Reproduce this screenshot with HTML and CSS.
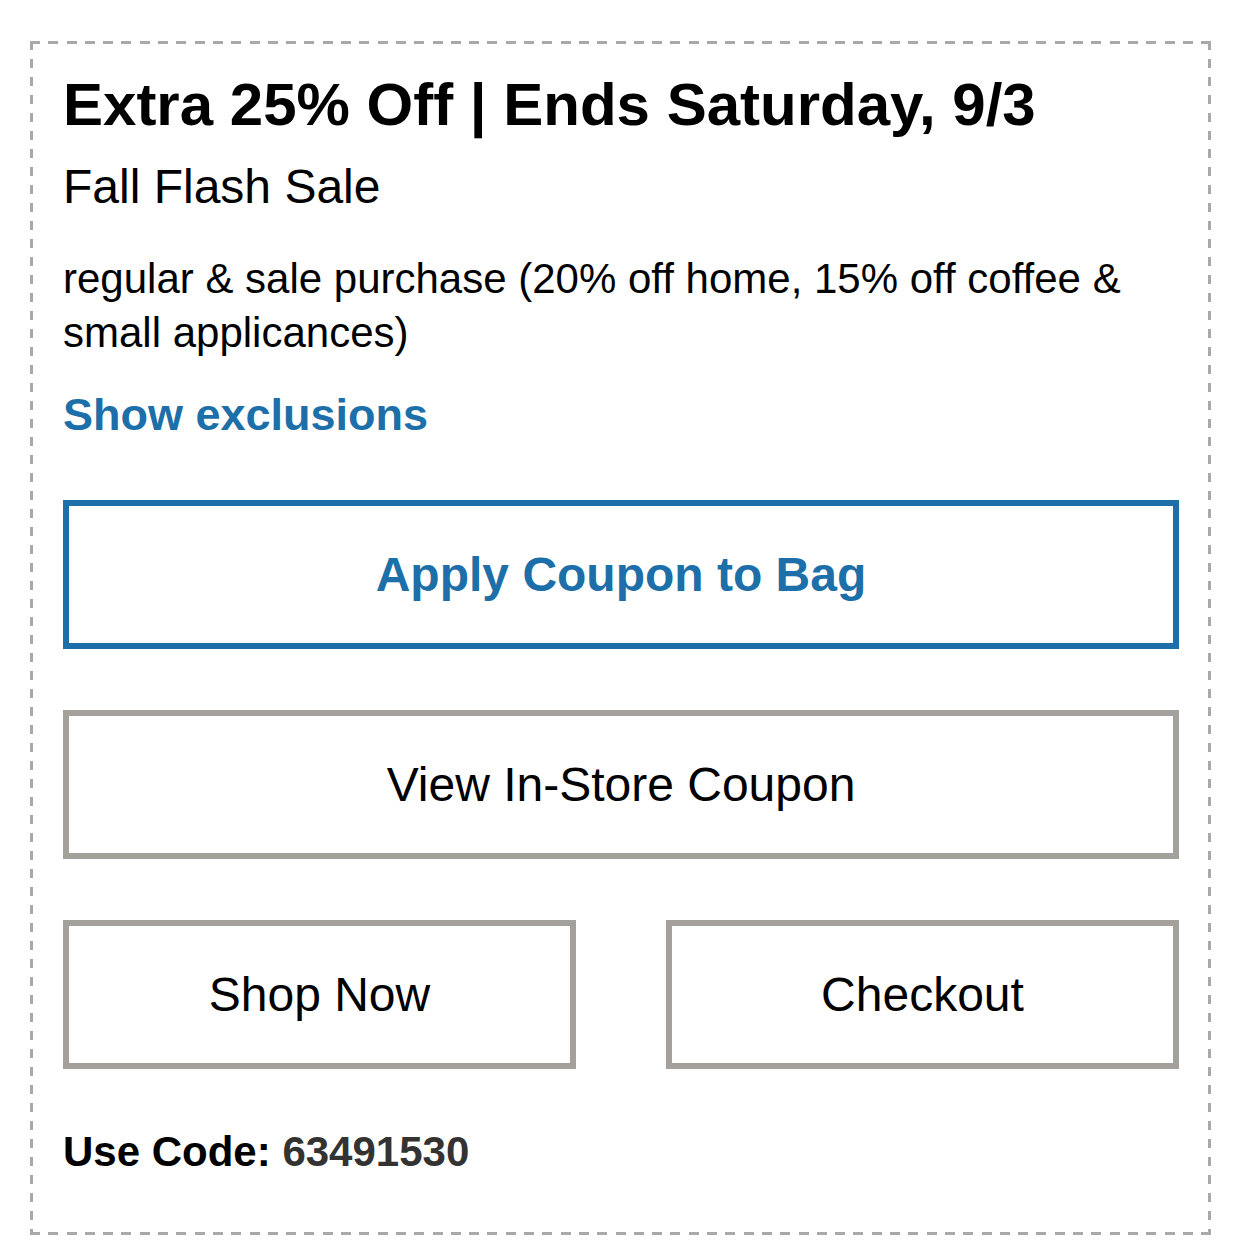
FILE: index.html
```html
<!DOCTYPE html>
<html lang="en">
<head>
<meta charset="utf-8">
<title>Coupon</title>
<link rel="stylesheet" href="styles.css">
</head>
<body>
<div class="coupon">
  <h1 class="coupon-title">Extra 25% Off | Ends Saturday, 9/3</h1>
  <h2 class="coupon-subtitle">Fall Flash Sale</h2>
  <p class="coupon-desc">regular &amp; sale purchase (20% off home, 15% off coffee &amp; small applicances)</p>
  <a class="coupon-link" href="#">Show exclusions</a>
  <div class="coupon-actions">
    <button class="btn btn-primary" type="button">Apply Coupon to Bag</button>
    <button class="btn btn-secondary" type="button">View In-Store Coupon</button>
    <div class="btn-row">
      <button class="btn btn-secondary" type="button">Shop Now</button>
      <button class="btn btn-secondary" type="button">Checkout</button>
    </div>
  </div>
  <p class="coupon-code">Use Code: <span class="code-value">63491530</span></p>
</div>
</body>
</html>
```

FILE: styles.css
```css
html, body {
  margin: 0;
  padding: 0;
  background: #ffffff;
}

body {
  font-family: "Liberation Sans", Arial, Helvetica, sans-serif;
  color: #000000;
}

.coupon {
  box-sizing: border-box;
  width: 1181px;
  margin: 41px 0 0 30px;
  padding: 27px 29px 56px 30px;
  border: 3px solid transparent;
  background:
    repeating-linear-gradient(to right, #a9a9a9 0 10px, transparent 10px 18.3px) left top / 100% 3px no-repeat border-box,
    repeating-linear-gradient(to right, #a9a9a9 0 10px, transparent 10px 18.3px) left bottom / 100% 3px no-repeat border-box,
    repeating-linear-gradient(to bottom, #a9a9a9 0 9px, transparent 9px 18px) left top / 3px 100% no-repeat border-box,
    repeating-linear-gradient(to bottom, #a9a9a9 0 9px, transparent 9px 18px) right top / 3px 100% no-repeat border-box,
    #ffffff;
}

.coupon-title {
  margin: 0;
  font-size: 60px;
  line-height: 68px;
  font-weight: 700;
}

.coupon-subtitle {
  margin: 20px 0 0;
  font-size: 48px;
  line-height: 56px;
  font-weight: 400;
}

.coupon-desc {
  margin: 37px 0 0;
  font-size: 42px;
  line-height: 54px;
}

.coupon-link {
  display: block;
  margin-top: 29px;
  font-size: 45px;
  line-height: 52px;
  font-weight: 700;
  color: #1c6fa8;
  text-decoration: none;
}

.coupon-actions {
  display: flex;
  flex-direction: column;
  gap: 61px;
  margin-top: 59px;
}

.btn {
  box-sizing: border-box;
  height: 149px;
  width: 100%;
  margin: 0;
  padding: 0;
  background: #ffffff;
  font-family: "Liberation Sans", Arial, Helvetica, sans-serif;
  font-size: 48px;
  color: #000000;
  cursor: pointer;
}

.btn-primary {
  border: 6px solid #1c6fa8;
  color: #1c6fa8;
  font-weight: 700;
}

.btn-secondary {
  border: 6px solid #a4a19d;
  font-weight: 400;
}

.btn-row {
  display: flex;
  gap: 90px;
}

.btn-row .btn {
  flex: 1 1 0;
}

.coupon-code {
  margin: 59px 0 0;
  font-size: 42px;
  line-height: 48px;
  font-weight: 700;
}

.code-value {
  color: #333333;
}
```
